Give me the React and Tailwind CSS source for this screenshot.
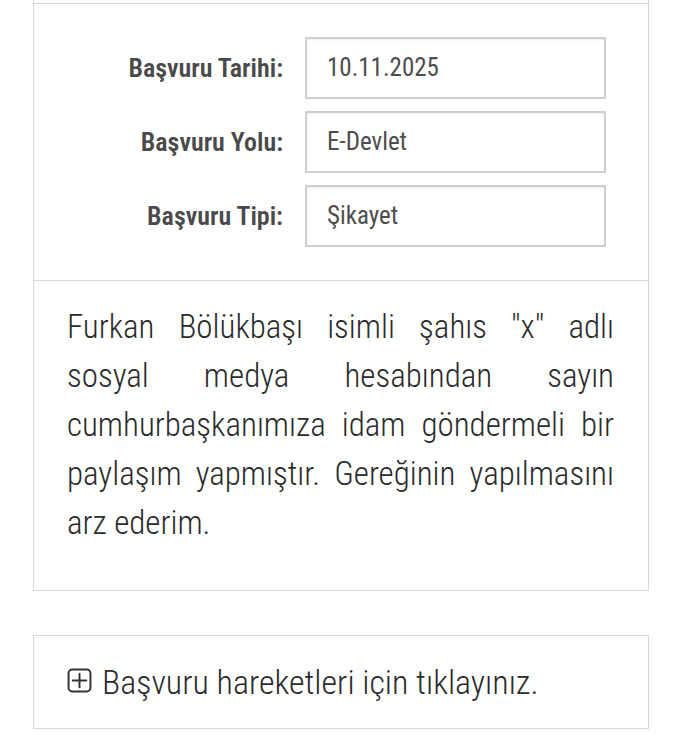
import React from "react";

const fields = [
  { label: "Başvuru Tarihi:", value: "10.11.2025" },
  { label: "Başvuru Yolu:", value: "E-Devlet" },
  { label: "Başvuru Tipi:", value: "Şikayet" },
];

const lines = [
  ["Furkan", "Bölükbaşı", "isimli", "şahıs", '"x"', "adlı"],
  ["sosyal", "medya", "hesabından", "sayın"],
  ["cumhurbaşkanımıza", "idam", "göndermeli", "bir"],
  ["paylaşım", "yapmıştır.", "Gereğinin", "yapılmasını"],
];

function PlusBox() {
  return (
    <svg width="25" height="25" viewBox="0 0 24 24" fill="none" stroke="#333" strokeWidth="1.9" strokeLinecap="round">
      <rect x="1.5" y="1.5" width="21" height="21" rx="3.5" />
      <path d="M12 5.5v13M5.5 12h13" />
    </svg>
  );
}

export default function App() {
  return (
    <div className="w-[681px] h-[738px] bg-white overflow-hidden font-['Roboto',sans-serif] [font-stretch:75%]">
      <div className="ml-[33px] w-[616px] border-x border-b border-[#d8d8d8] pt-[3px]">
        <div className="border-t border-[#d8d8d8] pt-[33px] pb-[33px] flex flex-col gap-[12px]">
          {fields.map((f) => (
            <div key={f.label} className="flex items-center">
              <div className="w-[249px] text-right text-[26px] font-semibold text-[#4a4a4a]">{f.label}</div>
              <div className="ml-[22px] w-[301px] h-[62px] border-2 border-[#cfcfcf] shadow-[inset_0_1px_2px_rgba(0,0,0,0.08)] flex items-center pl-[20px] text-[25px] text-[#4d4d4d]">
                {f.value}
              </div>
            </div>
          ))}
        </div>
        <div className="border-t border-[#d8d8d8] pl-[33px] pr-[34px] pt-[21px] pb-[43px] text-[33px] leading-[49px] font-light text-[#2b2b2b]">
          {lines.map((words, i) => (
            <div key={i} className="flex justify-between">
              {words.map((w, j) => (
                <span key={j}>{w}</span>
              ))}
            </div>
          ))}
          <div>arz ederim.</div>
        </div>
      </div>
      <div className="ml-[33px] mt-[44px] w-[616px] h-[94px] border border-[#d8d8d8] flex items-center pl-[33px] gap-[10px] text-[34px] font-light text-[#2b2b2b]">
        <span className="-mt-[3px]">
          <PlusBox />
        </span>
        <span>Başvuru hareketleri için tıklayınız.</span>
      </div>
    </div>
  );
}
